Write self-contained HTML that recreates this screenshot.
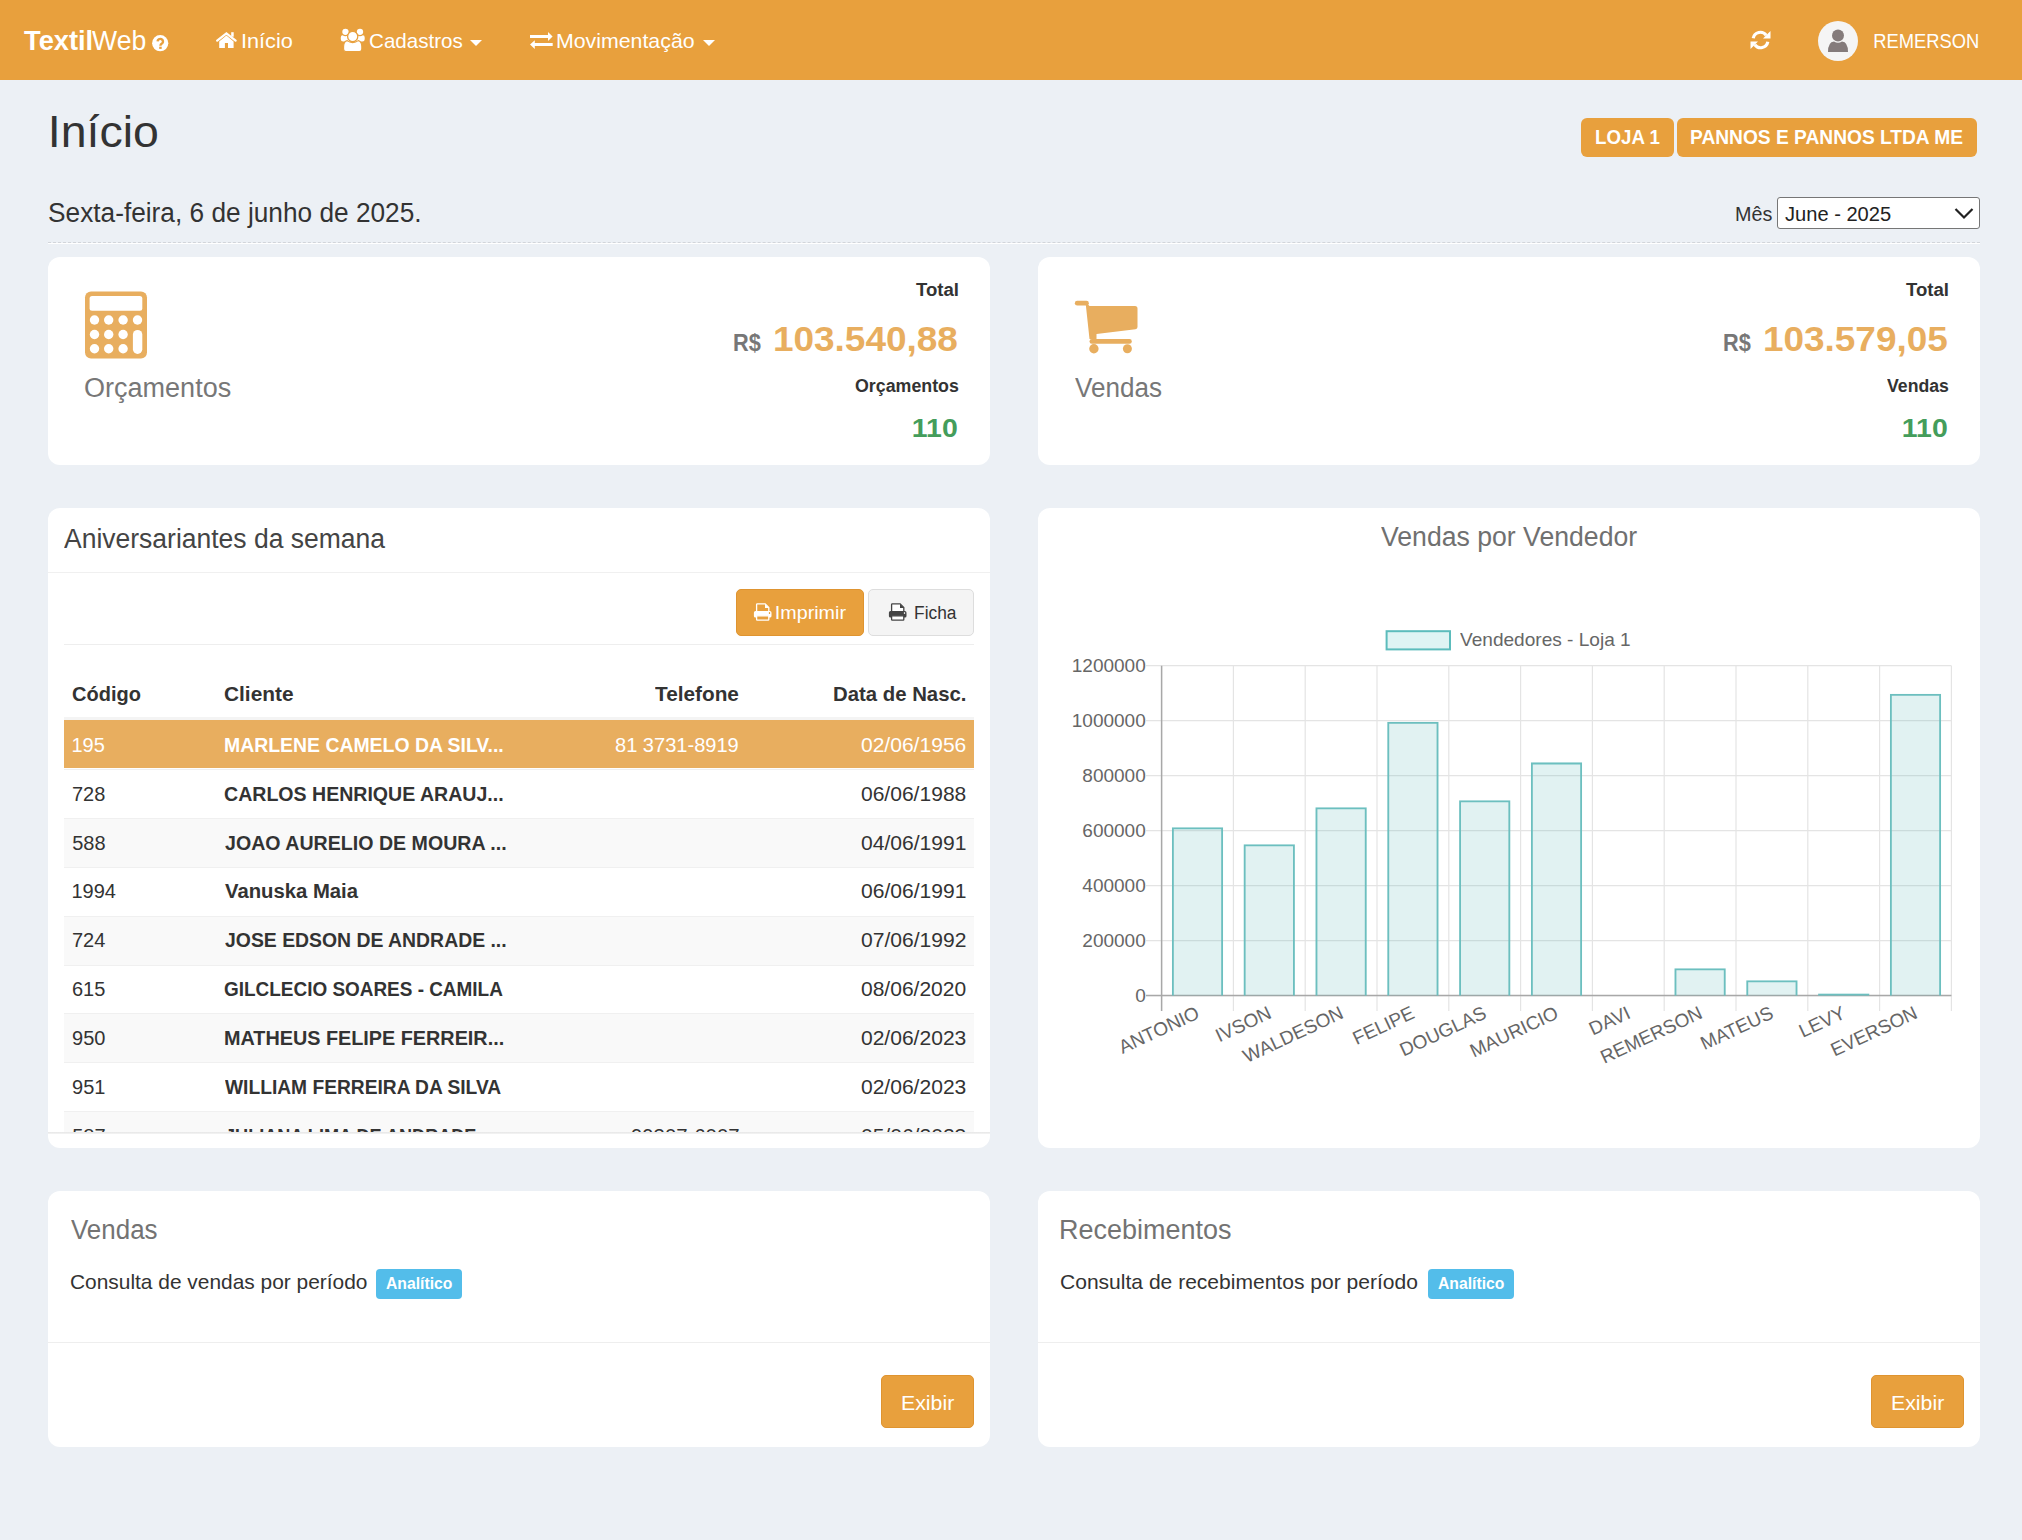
<!DOCTYPE html>
<html><head><meta charset="utf-8"><title>TextilWeb - Início</title>
<style>
html,body{margin:0;padding:0;width:2022px;height:1540px;overflow:hidden;background:#ECF0F5;font-family:"Liberation Sans",sans-serif}
.t{position:absolute;line-height:1;white-space:nowrap}
</style></head><body>
<div style="position:absolute;left:0px;top:0px;width:2022px;height:80px;background:#E8A03D"></div>
<div class="t" style="left:23.73px;top:28.00px;font-size:27px;color:#fff;font-weight:bold;transform:scaleX(1.0098);transform-origin:0.27px 0;">Textil</div>
<div class="t" style="left:91.86px;top:28.00px;font-size:27px;color:#fff;transform:scaleX(0.9852);transform-origin:0.14px 0;">Web</div>
<svg style="position:absolute;left:152px;top:35px" width="17" height="17" viewBox="0 0 17 17"><circle cx="8.2" cy="8.2" r="8.1" fill="#fff"/><path d="M5.6 6.4 A2.7 2.6 0 1 1 10.2 8.3 Q8.4 9.3 8.4 10.8" fill="none" stroke="#E8A03D" stroke-width="2.4"/><rect x="7.2" y="11.7" width="2.5" height="2.2" fill="#E8A03D"/></svg>
<svg style="position:absolute;left:215px;top:31px" width="23" height="18" viewBox="0 0 23 18"><polyline points="2.2,9.6 11.4,2.4 20.6,9.6" fill="none" stroke="#fff" stroke-width="2.3" stroke-linecap="round" stroke-linejoin="miter"/><rect x="16.2" y="1.2" width="2.5" height="4.5" fill="#fff"/><path d="M4.2 10.6 L11.4 4.6 L18.6 10.6 L18.6 17 L13 17 L13 12.1 L9.9 12.1 L9.9 17 L4.2 17 Z" fill="#fff"/></svg>
<div class="t" style="left:241.06px;top:30.00px;font-size:21px;color:#fff;transform:scaleX(1.0336);transform-origin:1.94px 0;">Início</div>
<svg style="position:absolute;left:340px;top:28px" width="26" height="24" viewBox="0 0 26 24"><circle cx="5.45" cy="3.8" r="3.15" fill="#fff"/><circle cx="20" cy="3.8" r="3.15" fill="#fff"/><path d="M0.8 9.6 Q0.8 7.3 2.6 7.3 Q3.9 8.2 5.45 8.2 Q7 8.2 8.3 7.3 Q10.5 7.3 10.5 9.6 L10.5 13.5 L3.2 13.5 Q0.8 13.5 0.8 11.2 Z" fill="#fff"/><path d="M24.7 9.6 Q24.7 7.3 22.9 7.3 Q21.6 8.2 20 8.2 Q18.5 8.2 17.2 7.3 Q15 7.3 15 9.6 L15 13.5 L22.3 13.5 Q24.7 13.5 24.7 11.2 Z" fill="#fff"/><circle cx="12.7" cy="8.5" r="5.1" fill="#fff" stroke="#E8A03D" stroke-width="1.3"/><path d="M3.6 18.8 Q3.6 13.3 7.2 12.6 Q9.6 14.6 12.7 14.6 Q15.8 14.6 18.2 12.6 Q21.8 13.3 21.8 18.8 L21.8 21 Q21.8 23.6 19.4 23.6 L6 23.6 Q3.6 23.6 3.6 21 Z" fill="#fff" stroke="#E8A03D" stroke-width="1.1"/></svg>
<div class="t" style="left:368.95px;top:29.60px;font-size:21px;color:#fff;transform:scaleX(0.9795);transform-origin:1.05px 0;">Cadastros</div>
<svg style="position:absolute;left:470px;top:40px" width="12" height="6" viewBox="0 0 12 6"><path d="M0 0 L12 0 L6 6Z" fill="#fff"/></svg>
<svg style="position:absolute;left:529px;top:32px" width="25" height="18" viewBox="0 0 25 18"><path d="M1 3.1 L19 3.1 L19 0 L23.6 4.6 L19 9.1 L19 6.1 L1 6.1 Z" fill="#fff"/><path d="M23.7 11 L5.8 11 L5.8 8.2 L1 12.6 L5.8 17 L5.8 14.1 L23.7 14.1 Z" fill="#fff"/></svg>
<div class="t" style="left:556.27px;top:29.60px;font-size:21px;color:#fff;transform:scaleX(1.0151);transform-origin:1.73px 0;">Movimentação</div>
<svg style="position:absolute;left:703px;top:40px" width="12" height="6" viewBox="0 0 12 6"><path d="M0 0 L12 0 L6 6Z" fill="#fff"/></svg>
<svg style="position:absolute;left:1750px;top:30px" width="21" height="20" viewBox="0 0 21 20"><path d="M3.2 8.2 A7.3 7.3 0 0 1 16.2 5.2" stroke="#fff" stroke-width="3.2" fill="none"/><path d="M20.5 1 L20.5 8.5 L13 8.5Z" fill="#fff"/><path d="M17.8 11.8 A7.3 7.3 0 0 1 4.8 14.8" stroke="#fff" stroke-width="3.2" fill="none"/><path d="M0.5 19 L0.5 11.5 L8 11.5Z" fill="#fff"/></svg>
<svg style="position:absolute;left:1818px;top:21px" width="40" height="40" viewBox="0 0 40 40"><circle cx="20" cy="20" r="20" fill="#f5f5f5"/><circle cx="20" cy="14.4" r="6" fill="#847b7b"/><path d="M10 31 Q10 21 16 20.5 Q20 23 24 20.5 Q30 21 30 31Z" fill="#847b7b"/></svg>
<div class="t" style="left:1873.27px;top:30.00px;font-size:21px;color:#fff;transform:scaleX(0.8739);transform-origin:1.73px 0;">REMERSON</div>
<div class="t" style="left:47.93px;top:110.00px;font-size:44px;color:#333;transform:scaleX(1.0571);transform-origin:4.07px 0;">Início</div>
<div style="position:absolute;left:1581px;top:118px;width:93px;height:39px;background:#E8A03D;border-radius:6px"></div>
<div class="t" style="left:1594.65px;top:126.60px;font-size:20px;color:#fff;font-weight:bold;transform:scaleX(0.9354);transform-origin:1.35px 0;">LOJA 1</div>
<div style="position:absolute;left:1677px;top:118px;width:300px;height:39px;background:#E8A03D;border-radius:6px"></div>
<div class="t" style="left:1690.15px;top:126.60px;font-size:20px;color:#fff;font-weight:bold;transform:scaleX(0.9586);transform-origin:1.35px 0;">PANNOS E PANNOS LTDA ME</div>
<div class="t" style="left:47.78px;top:200.00px;font-size:27px;color:#333;transform:scaleX(0.9721);transform-origin:1.21px 0;">Sexta-feira, 6 de junho de 2025.</div>
<div class="t" style="left:1735.35px;top:203.70px;font-size:20px;color:#333;transform:scaleX(0.9873);transform-origin:1.65px 0;">Mês</div>
<div style="position:absolute;left:1777px;top:197px;width:203px;height:32px;background:#fff;border:1px solid #767676;border-radius:3px;box-sizing:border-box"></div>
<div class="t" style="left:1784.70px;top:203.70px;font-size:20px;color:#222;transform:scaleX(1.0048);transform-origin:0.30px 0;">June - 2025</div>
<svg style="position:absolute;left:1954px;top:207px" width="20" height="13" viewBox="0 0 20 13"><path d="M1.5 2 L10 10.5 L18.5 2" stroke="#222" stroke-width="2.2" fill="none"/></svg>
<div style="position:absolute;left:48px;top:242px;width:1932px;height:0;border-top:1px dashed #d2d5da;border-bottom:1px solid #fff"></div>
<div style="position:absolute;left:48px;top:257px;width:942px;height:208px;background:#fff;border-radius:12px"></div>
<svg style="position:absolute;left:70px;top:280px" width="90" height="100" viewBox="0 0 90 100"><rect x="15" y="11.4" width="62" height="67" rx="6" fill="#E8AE5F"/><rect x="19.6" y="16" width="52.7" height="14.7" rx="2.5" fill="#fff"/><circle cx="24.5" cy="40.0" r="4.7" fill="#fff"/><circle cx="38.7" cy="40.0" r="4.7" fill="#fff"/><circle cx="53.1" cy="40.0" r="4.7" fill="#fff"/><circle cx="67.5" cy="40.0" r="4.7" fill="#fff"/><circle cx="24.5" cy="54.5" r="4.7" fill="#fff"/><circle cx="38.7" cy="54.5" r="4.7" fill="#fff"/><circle cx="53.1" cy="54.5" r="4.7" fill="#fff"/><circle cx="24.5" cy="68.8" r="4.7" fill="#fff"/><circle cx="38.7" cy="68.8" r="4.7" fill="#fff"/><circle cx="53.1" cy="68.8" r="4.7" fill="#fff"/><rect x="62.9" y="49.9" width="9.4" height="24" rx="4.7" fill="#fff"/></svg>
<div class="t" style="left:84.22px;top:375.00px;font-size:27px;color:#777;transform:scaleX(1.0010);transform-origin:1.28px 0;">Orçamentos</div>
<div class="t" style="left:916.32px;top:281.00px;font-size:18px;color:#333;font-weight:bold;transform:scaleX(1.0316);transform-origin:0.18px 0;">Total</div>
<div class="t" style="left:772.81px;top:321.00px;font-size:35px;color:#E8AE5F;font-weight:bold;transform:scaleX(1.0562);transform-origin:2.19px 0;">103.540,88</div>
<div class="t" style="left:733.45px;top:332.00px;font-size:23px;color:#777;font-weight:bold;transform:scaleX(0.9440);transform-origin:1.55px 0;">R$</div>
<div class="t" style="left:854.88px;top:376.50px;font-size:18px;color:#333;font-weight:bold;transform:scaleX(0.9885);transform-origin:0.72px 0;">Orçamentos</div>
<div class="t" style="left:912.44px;top:415.50px;font-size:25px;color:#449D5B;font-weight:bold;transform:scaleX(1.1391);transform-origin:1.56px 0;">110</div>
<div style="position:absolute;left:1038px;top:257px;width:942px;height:208px;background:#fff;border-radius:12px"></div>
<svg style="position:absolute;left:1060px;top:290px" width="100" height="70" viewBox="0 0 100 70"><path d="M17.2 13.2 L26.5 13.2" stroke="#E8AE5F" stroke-width="4.7" stroke-linecap="round"/><path d="M25.5 12 L29.5 16 L75 16 Q77.5 16 77.5 18.5 L77.5 37 Q77.5 39 75.5 39.3 L36.5 44 L36.5 49 L29.5 49 Z" fill="#E8AE5F"/><path d="M31.8 51.4 L69.5 51.4" stroke="#E8AE5F" stroke-width="4.6" stroke-linecap="round"/><circle cx="33.9" cy="58.8" r="4.7" fill="#E8AE5F"/><circle cx="67.4" cy="58.8" r="4.5" fill="#E8AE5F"/></svg>
<div class="t" style="left:1075.37px;top:375.00px;font-size:27px;color:#777;transform:scaleX(0.9659);transform-origin:0.14px 0;">Vendas</div>
<div class="t" style="left:1906.32px;top:281.00px;font-size:18px;color:#333;font-weight:bold;transform:scaleX(1.0316);transform-origin:0.18px 0;">Total</div>
<div class="t" style="left:1762.81px;top:321.00px;font-size:35px;color:#E8AE5F;font-weight:bold;transform:scaleX(1.0557);transform-origin:2.19px 0;">103.579,05</div>
<div class="t" style="left:1723.45px;top:332.00px;font-size:23px;color:#777;font-weight:bold;transform:scaleX(0.9440);transform-origin:1.55px 0;">R$</div>
<div class="t" style="left:1886.87px;top:376.50px;font-size:18px;color:#333;font-weight:bold;transform:scaleX(0.9816);transform-origin:0.14px 0;">Vendas</div>
<div class="t" style="left:1902.44px;top:415.50px;font-size:25px;color:#449D5B;font-weight:bold;transform:scaleX(1.1391);transform-origin:1.56px 0;">110</div>
<div style="position:absolute;left:48px;top:508px;width:942px;height:640px;background:#fff;border-radius:12px"></div>
<div class="t" style="left:63.93px;top:526.00px;font-size:27px;color:#444;transform:scaleX(0.9811);transform-origin:0.07px 0;">Aniversariantes da semana</div>
<div style="position:absolute;left:48px;top:572px;width:942px;height:1px;background:#f0f0f0"></div>
<div style="position:absolute;left:736px;top:589px;width:128px;height:47px;background:#E8A03D;border:1px solid #df9430;border-radius:5px;box-sizing:border-box"></div>
<svg style="position:absolute;left:753px;top:603px" width="20" height="19" viewBox="0 0 20 19"><path d="M3.6 9 L3.6 1.6 Q3.6 0.9 4.3 0.9 L12.2 0.9 L15.8 4.5 L15.8 9" fill="#E8A03D" stroke="#fff" stroke-width="1.3"/><path d="M12 0.9 L12 4.9 L15.9 4.9 Z" fill="#fff"/><rect x="0.9" y="8.1" width="17.6" height="6.4" rx="1.6" fill="#fff"/><rect x="15.9" y="9.1" width="1.2" height="1.9" fill="#E8A03D"/><rect x="3.6" y="12.8" width="12.2" height="4.4" rx="0.6" fill="#E8A03D" stroke="#fff" stroke-width="1.3"/></svg>
<div class="t" style="left:775.34px;top:604.00px;font-size:18px;color:#fff;transform:scaleX(1.0945);transform-origin:1.67px 0;">Imprimir</div>
<div style="position:absolute;left:868px;top:589px;width:106px;height:47px;background:#f4f4f4;border:1px solid #ddd;border-radius:5px;box-sizing:border-box"></div>
<svg style="position:absolute;left:888px;top:603px" width="20" height="19" viewBox="0 0 20 19"><path d="M3.6 9 L3.6 1.6 Q3.6 0.9 4.3 0.9 L12.2 0.9 L15.8 4.5 L15.8 9" fill="#fff" stroke="#444" stroke-width="1.3"/><path d="M12 0.9 L12 4.9 L15.9 4.9 Z" fill="#444"/><rect x="0.9" y="8.1" width="17.6" height="6.4" rx="1.6" fill="#444"/><rect x="15.9" y="9.1" width="1.2" height="1.9" fill="#ddd"/><rect x="3.6" y="12.8" width="12.2" height="4.4" rx="0.6" fill="#fff" stroke="#444" stroke-width="1.3"/></svg>
<div class="t" style="left:913.51px;top:604.00px;font-size:18px;color:#333;transform:scaleX(0.9631);transform-origin:1.49px 0;">Ficha</div>
<div style="position:absolute;left:64px;top:644px;width:910px;height:1px;background:#eee"></div>
<div class="t" style="left:71.86px;top:683.00px;font-size:21px;color:#333;font-weight:bold;transform:scaleX(0.9524);transform-origin:0.84px 0;">Código</div>
<div class="t" style="left:224.16px;top:683.00px;font-size:21px;color:#333;font-weight:bold;transform:scaleX(0.9933);transform-origin:0.84px 0;">Cliente</div>
<div class="t" style="left:654.79px;top:683.00px;font-size:21px;color:#333;font-weight:bold;transform:scaleX(0.9893);transform-origin:0.21px 0;">Telefone</div>
<div class="t" style="left:832.98px;top:683.00px;font-size:21px;color:#333;font-weight:bold;transform:scaleX(0.9683);transform-origin:1.42px 0;">Data de Nasc.</div>
<div style="position:absolute;left:64px;top:717px;width:910px;height:3px;background:#f4f4f4"></div>
<div style="position:absolute;left:48px;top:720px;width:942px;height:413px;overflow:hidden;border-radius:0 0 4px 4px">
<div style="position:absolute;left:16px;top:0.0px;width:910px;height:48.0px;background:#E8AE5F"></div>
<div class="t" style="left:23.50px;top:14.70px;font-size:20px;color:#fff;">195</div>
<div class="t" style="left:175.65px;top:14.70px;font-size:20px;color:#fff;font-weight:bold;transform:scaleX(0.9704);transform-origin:1.35px 0;">MARLENE CAMELO DA SILV...</div>
<div class="t" style="left:567.15px;top:14.70px;font-size:20px;color:#fff;transform:scaleX(1.0025);transform-origin:0.85px 0;">81 3731-8919</div>
<div class="t" style="left:812.60px;top:14.70px;font-size:20px;color:#fff;transform:scaleX(1.0523);transform-origin:0.80px 0;">02/06/1956</div>
<div style="position:absolute;left:16px;top:48.89999999999998px;width:910px;height:49.0px;background:#fff;border-top:1px solid #f0f0f0;box-sizing:border-box"></div>
<div class="t" style="left:24.00px;top:63.60px;font-size:20px;color:#333;">728</div>
<div class="t" style="left:176.20px;top:63.60px;font-size:20px;color:#333;font-weight:bold;transform:scaleX(0.9778);transform-origin:0.80px 0;">CARLOS HENRIQUE ARAUJ...</div>
<div class="t" style="left:812.60px;top:63.60px;font-size:20px;color:#333;transform:scaleX(1.0523);transform-origin:0.80px 0;">06/06/1988</div>
<div style="position:absolute;left:16px;top:97.79999999999995px;width:910px;height:49.0px;background:#f9f9f9;border-top:1px solid #f0f0f0;box-sizing:border-box"></div>
<div class="t" style="left:24.20px;top:112.50px;font-size:20px;color:#333;">588</div>
<div class="t" style="left:176.70px;top:112.50px;font-size:20px;color:#333;font-weight:bold;transform:scaleX(0.9799);transform-origin:0.30px 0;">JOAO AURELIO DE MOURA ...</div>
<div class="t" style="left:812.60px;top:112.50px;font-size:20px;color:#333;transform:scaleX(1.0534);transform-origin:0.80px 0;">04/06/1991</div>
<div style="position:absolute;left:16px;top:146.70000000000005px;width:910px;height:49.0px;background:#fff;border-top:1px solid #f0f0f0;box-sizing:border-box"></div>
<div class="t" style="left:23.50px;top:161.40px;font-size:20px;color:#333;">1994</div>
<div class="t" style="left:176.85px;top:161.40px;font-size:20px;color:#333;font-weight:bold;transform:scaleX(1.0141);transform-origin:0.15px 0;">Vanuska Maia</div>
<div class="t" style="left:812.60px;top:161.40px;font-size:20px;color:#333;transform:scaleX(1.0534);transform-origin:0.80px 0;">06/06/1991</div>
<div style="position:absolute;left:16px;top:195.60000000000002px;width:910px;height:49.0px;background:#f9f9f9;border-top:1px solid #f0f0f0;box-sizing:border-box"></div>
<div class="t" style="left:24.00px;top:210.30px;font-size:20px;color:#333;">724</div>
<div class="t" style="left:176.70px;top:210.30px;font-size:20px;color:#333;font-weight:bold;transform:scaleX(0.9697);transform-origin:0.30px 0;">JOSE EDSON DE ANDRADE ...</div>
<div class="t" style="left:812.60px;top:210.30px;font-size:20px;color:#333;transform:scaleX(1.0539);transform-origin:0.80px 0;">07/06/1992</div>
<div style="position:absolute;left:16px;top:244.5px;width:910px;height:49.0px;background:#fff;border-top:1px solid #f0f0f0;box-sizing:border-box"></div>
<div class="t" style="left:24.00px;top:259.20px;font-size:20px;color:#333;">615</div>
<div class="t" style="left:176.20px;top:259.20px;font-size:20px;color:#333;font-weight:bold;transform:scaleX(0.9468);transform-origin:0.80px 0;">GILCLECIO SOARES - CAMILA</div>
<div class="t" style="left:812.60px;top:259.20px;font-size:20px;color:#333;transform:scaleX(1.0512);transform-origin:0.80px 0;">08/06/2020</div>
<div style="position:absolute;left:16px;top:293.4px;width:910px;height:49.0px;background:#f9f9f9;border-top:1px solid #f0f0f0;box-sizing:border-box"></div>
<div class="t" style="left:24.05px;top:308.10px;font-size:20px;color:#333;">950</div>
<div class="t" style="left:175.65px;top:308.10px;font-size:20px;color:#333;font-weight:bold;transform:scaleX(0.9900);transform-origin:1.35px 0;">MATHEUS FELIPE FERREIR...</div>
<div class="t" style="left:812.60px;top:308.10px;font-size:20px;color:#333;transform:scaleX(1.0523);transform-origin:0.80px 0;">02/06/2023</div>
<div style="position:absolute;left:16px;top:342.29999999999995px;width:910px;height:49.0px;background:#fff;border-top:1px solid #f0f0f0;box-sizing:border-box"></div>
<div class="t" style="left:24.05px;top:357.00px;font-size:20px;color:#333;">951</div>
<div class="t" style="left:177.00px;top:357.00px;font-size:20px;color:#333;font-weight:bold;transform:scaleX(0.9596);transform-origin:0.00px 0;">WILLIAM FERREIRA DA SILVA</div>
<div class="t" style="left:812.60px;top:357.00px;font-size:20px;color:#333;transform:scaleX(1.0523);transform-origin:0.80px 0;">02/06/2023</div>
<div style="position:absolute;left:16px;top:391.20000000000005px;width:910px;height:49.0px;background:#f9f9f9;border-top:1px solid #f0f0f0;box-sizing:border-box"></div>
<div class="t" style="left:24.20px;top:405.90px;font-size:20px;color:#333;">587</div>
<div class="t" style="left:176.70px;top:405.90px;font-size:20px;color:#333;font-weight:bold;transform:scaleX(0.9050);transform-origin:0.30px 0;">JULIANA LIMA DE ANDRADE ...</div>
<div class="t" style="left:582.55px;top:405.90px;font-size:20px;color:#333;transform:scaleX(1.0162);transform-origin:0.95px 0;">99307-6007</div>
<div class="t" style="left:812.60px;top:405.90px;font-size:20px;color:#333;transform:scaleX(1.0523);transform-origin:0.80px 0;">05/06/2023</div>
</div>
<div style="position:absolute;left:48px;top:1132px;width:942px;height:2px;background:linear-gradient(#e6e6e6,#f5f5f5)"></div>
<div style="position:absolute;left:1038px;top:508px;width:942px;height:640px;background:#fff;border-radius:12px"></div>
<div class="t" style="left:1381.07px;top:524.20px;font-size:27px;color:#707070;transform:scaleX(0.9861);transform-origin:0.14px 0;">Vendas por Vendedor</div>
<svg style="position:absolute;left:0;top:0" width="2022" height="1540"><line x1="1146" y1="665.7" x2="1951.4" y2="665.7" stroke="#e4e4e4" stroke-width="1.2"/><line x1="1146" y1="720.7" x2="1951.4" y2="720.7" stroke="#e4e4e4" stroke-width="1.2"/><line x1="1146" y1="775.7" x2="1951.4" y2="775.7" stroke="#e4e4e4" stroke-width="1.2"/><line x1="1146" y1="830.7" x2="1951.4" y2="830.7" stroke="#e4e4e4" stroke-width="1.2"/><line x1="1146" y1="885.6" x2="1951.4" y2="885.6" stroke="#e4e4e4" stroke-width="1.2"/><line x1="1146" y1="940.6" x2="1951.4" y2="940.6" stroke="#e4e4e4" stroke-width="1.2"/><line x1="1146" y1="995.6" x2="1951.4" y2="995.6" stroke="#e4e4e4" stroke-width="1.2"/><line x1="1161.6" y1="665.7" x2="1161.6" y2="1011" stroke="#e4e4e4" stroke-width="1.2"/><line x1="1233.4" y1="665.7" x2="1233.4" y2="1011" stroke="#e4e4e4" stroke-width="1.2"/><line x1="1305.2" y1="665.7" x2="1305.2" y2="1011" stroke="#e4e4e4" stroke-width="1.2"/><line x1="1377.0" y1="665.7" x2="1377.0" y2="1011" stroke="#e4e4e4" stroke-width="1.2"/><line x1="1448.8" y1="665.7" x2="1448.8" y2="1011" stroke="#e4e4e4" stroke-width="1.2"/><line x1="1520.6" y1="665.7" x2="1520.6" y2="1011" stroke="#e4e4e4" stroke-width="1.2"/><line x1="1592.4" y1="665.7" x2="1592.4" y2="1011" stroke="#e4e4e4" stroke-width="1.2"/><line x1="1664.2" y1="665.7" x2="1664.2" y2="1011" stroke="#e4e4e4" stroke-width="1.2"/><line x1="1736.0" y1="665.7" x2="1736.0" y2="1011" stroke="#e4e4e4" stroke-width="1.2"/><line x1="1807.8" y1="665.7" x2="1807.8" y2="1011" stroke="#e4e4e4" stroke-width="1.2"/><line x1="1879.6" y1="665.7" x2="1879.6" y2="1011" stroke="#e4e4e4" stroke-width="1.2"/><line x1="1951.4" y1="665.7" x2="1951.4" y2="1011" stroke="#e4e4e4" stroke-width="1.2"/><line x1="1161.6" y1="665.7" x2="1161.6" y2="1011" stroke="#a8a8a8" stroke-width="1.5"/><line x1="1146" y1="995.6" x2="1951.4" y2="995.6" stroke="#a8a8a8" stroke-width="1.5"/><rect x="1171.9" y="827.3" width="51.2" height="168.3" fill="rgba(75,180,180,0.17)"/><path d="M1172.9 995.6 L1172.9 828.3 L1222.1 828.3 L1222.1 995.6" fill="none" stroke="#6cbfbf" stroke-width="1.8"/><rect x="1243.7" y="844.3" width="51.2" height="151.3" fill="rgba(75,180,180,0.17)"/><path d="M1244.7 995.6 L1244.7 845.3 L1293.9 845.3 L1293.9 995.6" fill="none" stroke="#6cbfbf" stroke-width="1.8"/><rect x="1315.5" y="807.3" width="51.2" height="188.3" fill="rgba(75,180,180,0.17)"/><path d="M1316.5 995.6 L1316.5 808.3 L1365.7 808.3 L1365.7 995.6" fill="none" stroke="#6cbfbf" stroke-width="1.8"/><rect x="1387.3" y="721.8" width="51.2" height="273.8" fill="rgba(75,180,180,0.17)"/><path d="M1388.3 995.6 L1388.3 722.8 L1437.5 722.8 L1437.5 995.6" fill="none" stroke="#6cbfbf" stroke-width="1.8"/><rect x="1459.1" y="800.3" width="51.2" height="195.3" fill="rgba(75,180,180,0.17)"/><path d="M1460.1 995.6 L1460.1 801.3 L1509.3 801.3 L1509.3 995.6" fill="none" stroke="#6cbfbf" stroke-width="1.8"/><rect x="1530.9" y="762.5" width="51.2" height="233.1" fill="rgba(75,180,180,0.17)"/><path d="M1531.9 995.6 L1531.9 763.5 L1581.1 763.5 L1581.1 995.6" fill="none" stroke="#6cbfbf" stroke-width="1.8"/><rect x="1674.5" y="968.4" width="51.2" height="27.2" fill="rgba(75,180,180,0.17)"/><path d="M1675.5 995.6 L1675.5 969.4 L1724.7 969.4 L1724.7 995.6" fill="none" stroke="#6cbfbf" stroke-width="1.8"/><rect x="1746.3" y="980.3" width="51.2" height="15.3" fill="rgba(75,180,180,0.17)"/><path d="M1747.3 995.6 L1747.3 981.3 L1796.5 981.3 L1796.5 995.6" fill="none" stroke="#6cbfbf" stroke-width="1.8"/><rect x="1818.1" y="993.6" width="51.2" height="2.0" fill="rgba(75,180,180,0.17)"/><path d="M1819.1 995.6 L1819.1 994.6 L1868.3 994.6 L1868.3 995.6" fill="none" stroke="#6cbfbf" stroke-width="1.8"/><rect x="1889.9" y="693.8" width="51.2" height="301.8" fill="rgba(75,180,180,0.17)"/><path d="M1890.9 995.6 L1890.9 694.8 L1940.1 694.8 L1940.1 995.6" fill="none" stroke="#6cbfbf" stroke-width="1.8"/><rect x="1386.6" y="631.2" width="63.4" height="18.2" fill="rgba(75,192,192,0.18)" stroke="#5cbcbc" stroke-width="2"/></svg>
<div class="t" style="left:1459.90px;top:630.30px;font-size:19px;color:#666;transform:scaleX(1.0038);transform-origin:0.10px 0;">Vendedores - Loja 1</div>
<div class="t" style="left:1071.76px;top:656.20px;font-size:19px;color:#666;">1200000</div>
<div class="t" style="left:1071.76px;top:711.18px;font-size:19px;color:#666;">1000000</div>
<div class="t" style="left:1082.35px;top:766.17px;font-size:19px;color:#666;">800000</div>
<div class="t" style="left:1082.35px;top:821.15px;font-size:19px;color:#666;">600000</div>
<div class="t" style="left:1082.35px;top:876.13px;font-size:19px;color:#666;">400000</div>
<div class="t" style="left:1082.35px;top:931.12px;font-size:19px;color:#666;">200000</div>
<div class="t" style="left:1135.17px;top:986.10px;font-size:19px;color:#666;">0</div>
<div class="t" style="left:1194.0px;top:1003px;font-size:19px;color:#666;transform-origin:100% 0;transform:translateX(-100%) rotate(-25deg)">ANTONIO</div>
<div class="t" style="left:1265.8px;top:1003px;font-size:19px;color:#666;transform-origin:100% 0;transform:translateX(-100%) rotate(-25deg)">IVSON</div>
<div class="t" style="left:1337.6px;top:1003px;font-size:19px;color:#666;transform-origin:100% 0;transform:translateX(-100%) rotate(-25deg)">WALDESON</div>
<div class="t" style="left:1409.4px;top:1003px;font-size:19px;color:#666;transform-origin:100% 0;transform:translateX(-100%) rotate(-25deg)">FELIPE</div>
<div class="t" style="left:1481.2px;top:1003px;font-size:19px;color:#666;transform-origin:100% 0;transform:translateX(-100%) rotate(-25deg)">DOUGLAS</div>
<div class="t" style="left:1553.0px;top:1003px;font-size:19px;color:#666;transform-origin:100% 0;transform:translateX(-100%) rotate(-25deg)">MAURICIO</div>
<div class="t" style="left:1624.8px;top:1003px;font-size:19px;color:#666;transform-origin:100% 0;transform:translateX(-100%) rotate(-25deg)">DAVI</div>
<div class="t" style="left:1696.6px;top:1003px;font-size:19px;color:#666;transform-origin:100% 0;transform:translateX(-100%) rotate(-25deg)">REMERSON</div>
<div class="t" style="left:1768.4px;top:1003px;font-size:19px;color:#666;transform-origin:100% 0;transform:translateX(-100%) rotate(-25deg)">MATEUS</div>
<div class="t" style="left:1840.2px;top:1003px;font-size:19px;color:#666;transform-origin:100% 0;transform:translateX(-100%) rotate(-25deg)">LEVY</div>
<div class="t" style="left:1912.0px;top:1003px;font-size:19px;color:#666;transform-origin:100% 0;transform:translateX(-100%) rotate(-25deg)">EVERSON</div>
<div style="position:absolute;left:48px;top:1191px;width:942px;height:256px;background:#fff;border-radius:12px"></div>
<div class="t" style="left:70.86px;top:1217.00px;font-size:27px;color:#737373;transform:scaleX(0.9603);transform-origin:0.14px 0;">Vendas</div>
<div class="t" style="left:70.25px;top:1271.00px;font-size:21px;color:#333;transform:scaleX(0.9950);transform-origin:1.05px 0;">Consulta de vendas por período</div>
<div style="position:absolute;left:376.2px;top:1269.3px;width:85.69999999999999px;height:29.700000000000045px;background:#53bdea;border-radius:4px"></div>
<div class="t" style="left:385.97px;top:1275.00px;font-size:17px;color:#fff;font-weight:bold;transform:scaleX(0.9234);transform-origin:0.43px 0;">Analítico</div>
<div style="position:absolute;left:48px;top:1342px;width:942px;height:1px;background:#eee"></div>
<div style="position:absolute;left:881px;top:1375px;width:93px;height:53px;background:#E8A03D;border:1px solid #df9430;border-radius:5px;box-sizing:border-box"></div>
<div class="t" style="left:900.87px;top:1392.00px;font-size:21px;color:#fff;transform:scaleX(1.0148);transform-origin:1.73px 0;">Exibir</div>
<div style="position:absolute;left:1038px;top:1191px;width:942px;height:256px;background:#fff;border-radius:12px"></div>
<div class="t" style="left:1058.77px;top:1217.00px;font-size:27px;color:#737373;transform:scaleX(0.9987);transform-origin:2.23px 0;">Recebimentos</div>
<div class="t" style="left:1060.25px;top:1271.00px;font-size:21px;color:#333;transform:scaleX(1.0019);transform-origin:1.05px 0;">Consulta de recebimentos por período</div>
<div style="position:absolute;left:1428.2px;top:1269.3px;width:85.70000000000005px;height:29.700000000000045px;background:#53bdea;border-radius:4px"></div>
<div class="t" style="left:1437.98px;top:1275.00px;font-size:17px;color:#fff;font-weight:bold;transform:scaleX(0.9234);transform-origin:0.43px 0;">Analítico</div>
<div style="position:absolute;left:1038px;top:1342px;width:942px;height:1px;background:#eee"></div>
<div style="position:absolute;left:1871px;top:1375px;width:93px;height:53px;background:#E8A03D;border:1px solid #df9430;border-radius:5px;box-sizing:border-box"></div>
<div class="t" style="left:1890.87px;top:1392.00px;font-size:21px;color:#fff;transform:scaleX(1.0148);transform-origin:1.73px 0;">Exibir</div>
</body></html>
